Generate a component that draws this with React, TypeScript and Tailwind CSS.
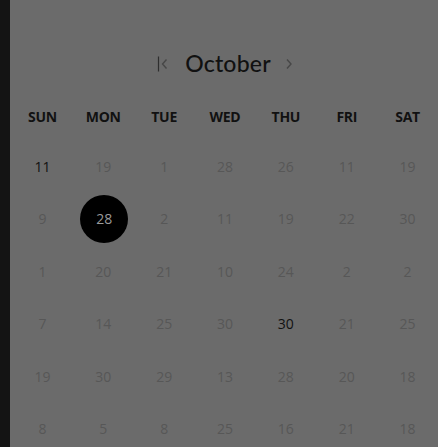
import React from 'react'

const weekdays = ['SUN', 'MON', 'TUE', 'WED', 'THU', 'FRI', 'SAT']

const rows = [
  [11, 19, 1, 28, 26, 11, 19],
  [9, 28, 2, 11, 19, 22, 30],
  [1, 20, 21, 10, 24, 2, 2],
  [7, 14, 25, 30, 30, 21, 25],
  [19, 30, 29, 13, 28, 20, 18],
  [8, 5, 8, 25, 16, 21, 18],
]

// row, col of highlighted cells
const dark: string[] = ['0-0', '3-4']
const selected = '1-1'

const App = () => {
  return (
    <div className="flex h-[447px] w-[438px] overflow-hidden bg-[#141414] font-['Open_Sans',sans-serif]">
      <div className="w-[10px] shrink-0" />
      <main className="flex-1 bg-[#6b6b6b] pl-[2px] pt-[47px]">
        <div className="flex h-8 items-center justify-center">
          <svg width="12" height="18" viewBox="0 0 12 18" className="mr-[16px] mt-[1px]">
            <path d="M1.5 1.5v15" stroke="#2e2e2e" strokeWidth="1.2" fill="none" />
            <path d="M9.5 4.5 5.5 9l4 4.5" stroke="#474747" strokeWidth="1.4" fill="none" />
          </svg>
          <span className="font-['Lato',sans-serif] text-[23px] font-medium leading-none tracking-[0.2px] text-[#111]">
            October
          </span>
          <svg width="8" height="14" viewBox="0 0 8 14" className="ml-[14px] mt-[1px]">
            <path d="M2 2.5 6 7l-4 4.5" stroke="#474747" strokeWidth="1.4" fill="none" />
          </svg>
        </div>

        <div className="mt-[13px] grid h-12 grid-cols-7 items-center">
          {weekdays.map((d) => (
            <div key={d} className="text-center text-[14px] font-bold tracking-[-0.3px] text-[#111]">
              {d}
            </div>
          ))}
        </div>

        <div className="grid grid-cols-7">
          {rows.map((row, r) =>
            row.map((n, c) => {
              const key = `${r}-${c}`
              if (key === selected) {
                return (
                  <div key={key} className="flex h-[52.5px] items-center justify-center">
                    <div className="ml-[2px] flex h-12 w-12 items-center justify-center rounded-full bg-black text-[14px] text-[#9a9a9a]">
                      {n}
                    </div>
                  </div>
                )
              }
              return (
                <div
                  key={key}
                  className={
                    dark.includes(key)
                      ? 'flex h-[52.5px] items-center justify-center text-[14px] text-[#111]'
                      : 'flex h-[52.5px] items-center justify-center text-[14px] text-[#575757]'
                  }
                >
                  {n}
                </div>
              )
            })
          )}
        </div>
      </main>
    </div>
  )
}

export default App
